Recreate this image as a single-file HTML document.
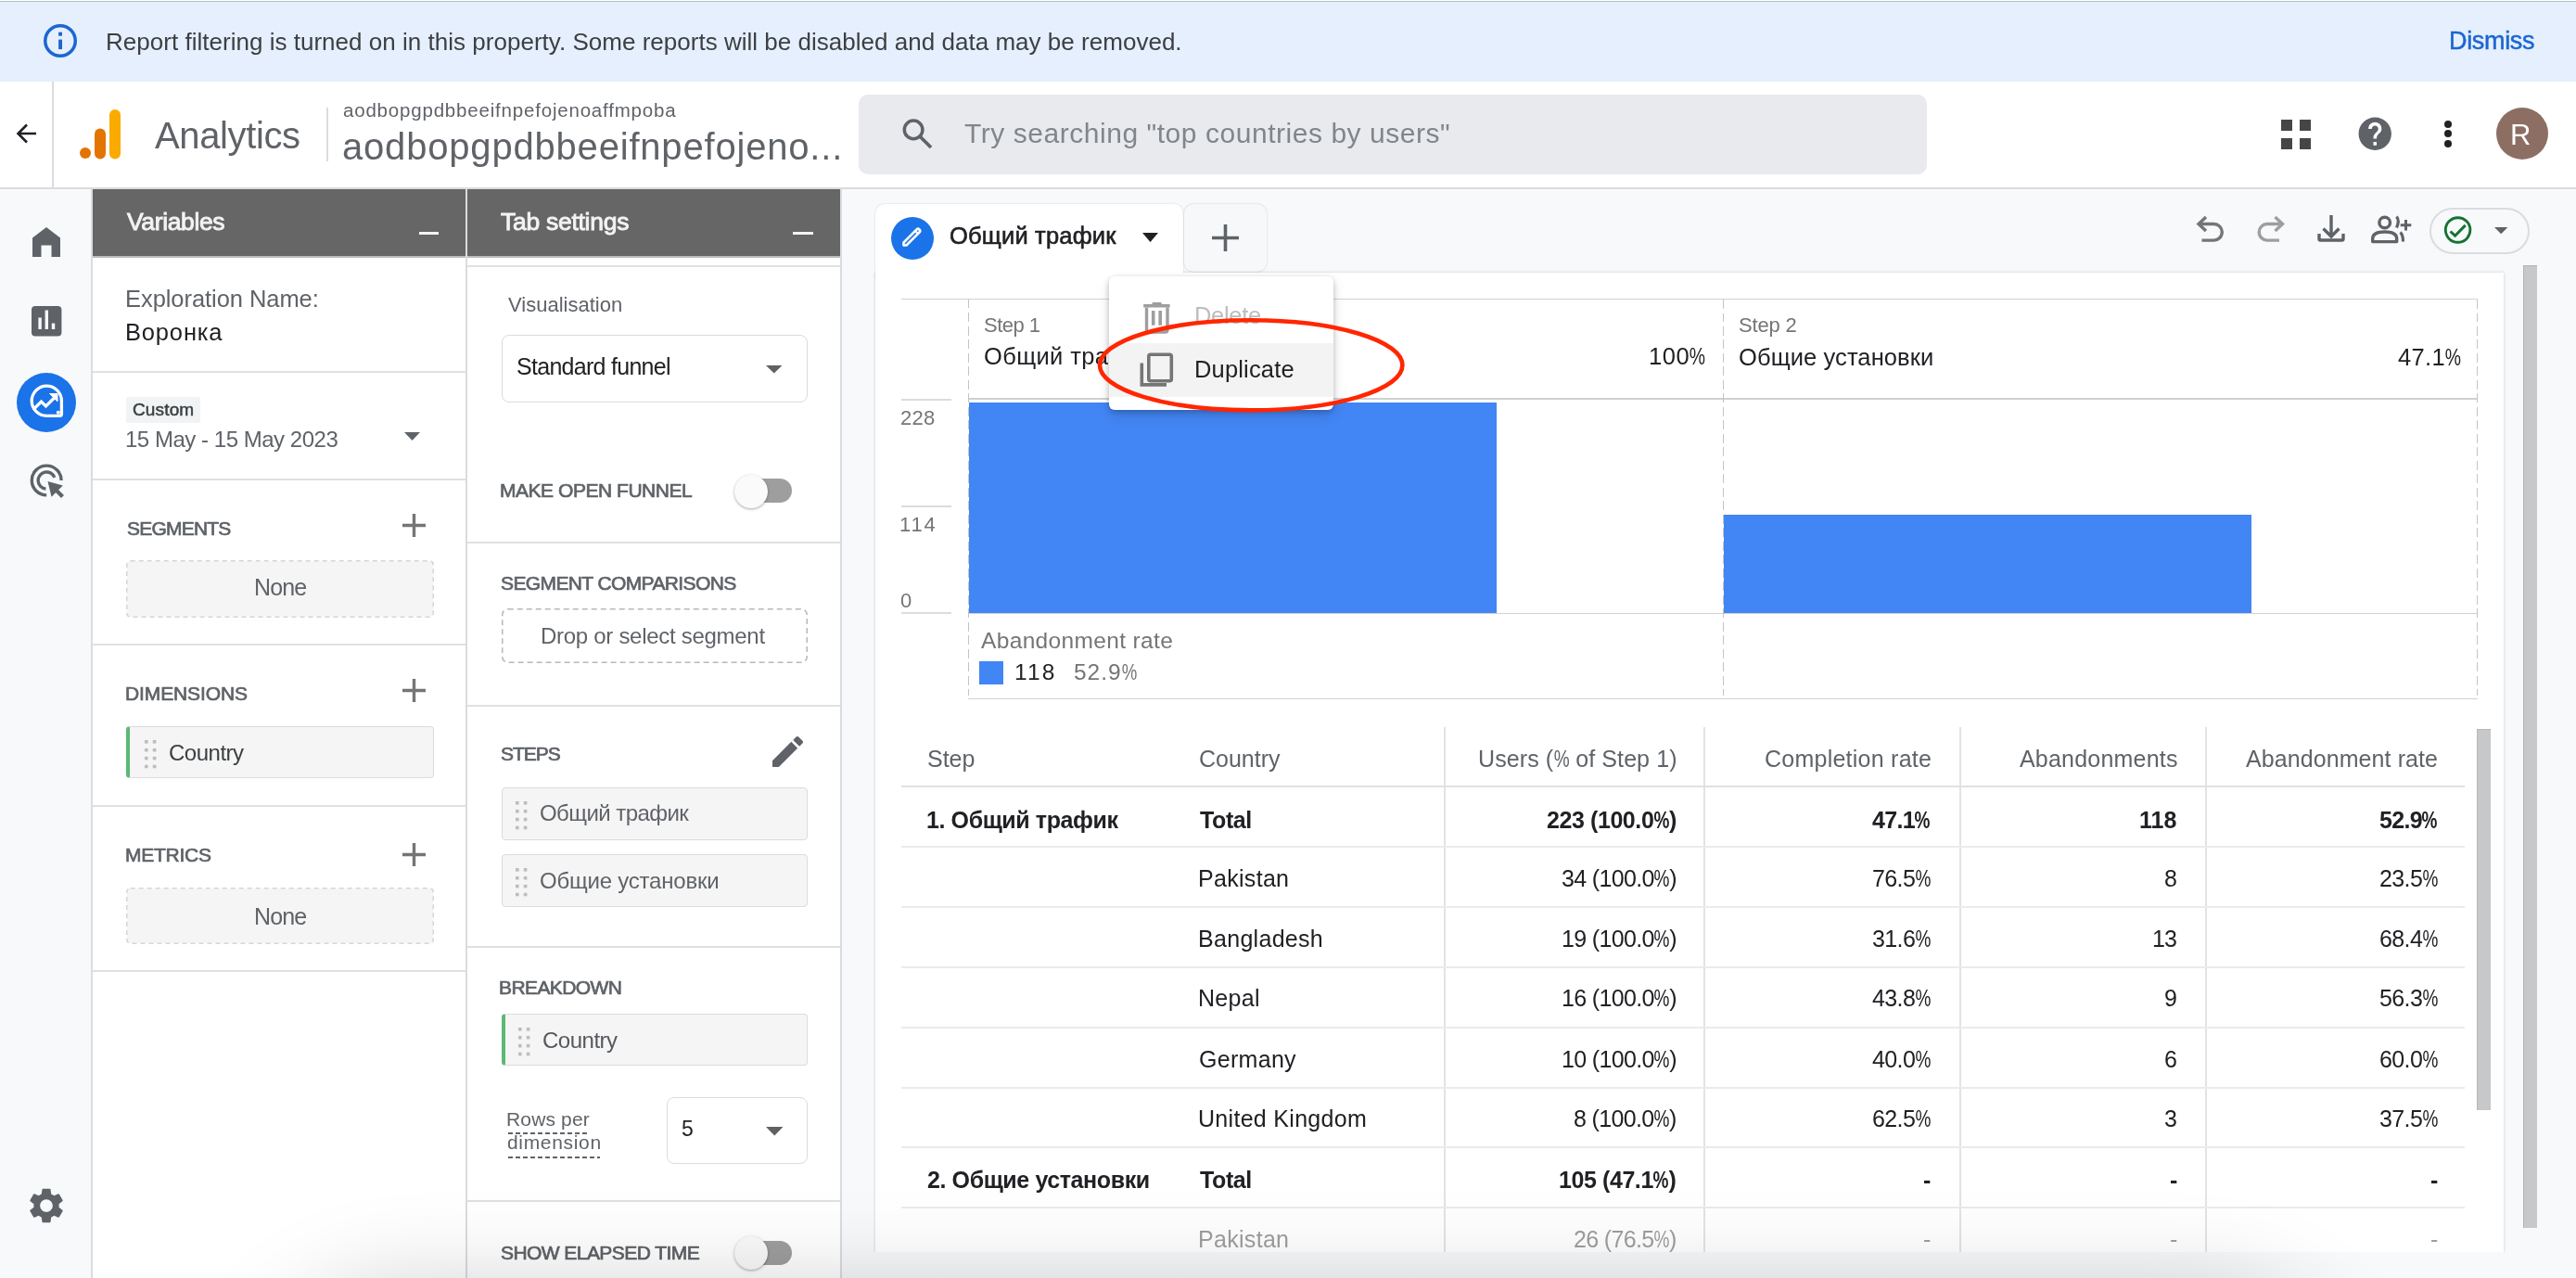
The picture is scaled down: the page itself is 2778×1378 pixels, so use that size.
<!DOCTYPE html>
<html><head><meta charset="utf-8"><style>
html,body{margin:0;padding:0;}
body{width:2778px;height:1378px;overflow:hidden;position:relative;background:#f8f9fa;font-family:"Liberation Sans",sans-serif;}
.t{position:absolute;white-space:pre;line-height:1;will-change:transform;}
.b{position:absolute;box-sizing:border-box;}
.pc{display:inline-block;transform:scaleX(.76);margin:0 -.106em;}
svg{position:absolute;overflow:visible;}
</style></head><body>
<div class="b" style="left:0px;top:0px;width:2778px;height:1px;background:#fff"></div><div class="b" style="left:0px;top:1px;width:2778px;height:1px;background:#b4bec6"></div><div class="b" style="left:0px;top:2px;width:2778px;height:86px;background:#e6effd"></div><svg style="left:46.8px;top:26.3px" width="36" height="36"><circle cx="18" cy="18" r="16.25" fill="none" stroke="#1b66d2" stroke-width="3.5"/><rect x="16.1" y="16.6" width="3.9" height="10.5" fill="#1b66d2"/><rect x="16.1" y="8.7" width="3.9" height="4" fill="#1b66d2"/></svg><div class="t" style="left:114.00px;top:31.90px;font-size:26px;font-weight:400;color:#3c4043;letter-spacing:0.020px;">Report filtering is turned on in this property. Some reports will be disabled and data may be removed.</div><div class="t" style="left:2641.00px;top:31.05px;font-size:27px;font-weight:400;color:#1b66d2;letter-spacing:-0.333px;-webkit-text-stroke:0.5px #1b66d2;">Dismiss</div><div class="b" style="left:0px;top:88px;width:2778px;height:114px;background:#fff"></div><div class="b" style="left:0px;top:202px;width:2778px;height:2px;background:#dadce0"></div><div class="b" style="left:56px;top:88px;width:2px;height:114px;background:#dadce0"></div><svg style="left:17px;top:132px" width="24" height="24" viewBox="0 0 24 24"><path d="M22 12H3.5M12 2.5L2.5 12L12 21.5" fill="none" stroke="#202124" stroke-width="2.6"/></svg><svg style="left:80px;top:118px" width="52" height="54" viewBox="0 0 52 54"><circle cx="12" cy="47" r="6" fill="#e37400"/><rect x="22" y="20.5" width="12" height="33" rx="6" fill="#e37400"/><rect x="38" y="0" width="12" height="53.5" rx="6" fill="#f9ab00"/></svg><div class="t" style="left:167.00px;top:126.00px;font-size:40px;font-weight:400;color:#5f6368;letter-spacing:-0.375px;">Analytics</div><div class="b" style="left:352px;top:116px;width:2px;height:58px;background:#dadce0"></div><div class="t" style="left:370.00px;top:108.58px;font-size:20.5px;font-weight:400;color:#5f6368;letter-spacing:0.806px;">aodbopgpdbbeeifnpefojenoaffmpoba</div><div class="t" style="left:369.00px;top:138.00px;font-size:40px;font-weight:400;color:#5f6368;letter-spacing:0.808px;">aodbopgpdbbeeifnpefojeno...</div><div class="b" style="left:926px;top:102px;width:1152px;height:86px;background:#e9eaed;border-radius:10px"></div><svg style="left:960px;top:115px" width="60" height="60"><circle cx="25.1" cy="24.9" r="9.8" fill="none" stroke="#5f6368" stroke-width="3.5"/><path d="M32.2 32.2L44 44" stroke="#5f6368" stroke-width="3.7"/></svg><div class="t" style="left:1040.00px;top:128.50px;font-size:30px;font-weight:400;color:#80868b;letter-spacing:0.541px;">Try searching &quot;top countries by users&quot;</div><div class="b" style="left:2460px;top:129px;width:12px;height:12px;background:#444746"></div><div class="b" style="left:2460px;top:149px;width:12px;height:12px;background:#444746"></div><div class="b" style="left:2480px;top:129px;width:12px;height:12px;background:#444746"></div><div class="b" style="left:2480px;top:149px;width:12px;height:12px;background:#444746"></div><svg style="left:2539.8px;top:122.8px" width="42.5" height="42.5" viewBox="0 0 24 24"><path fill="#5f6368" d="M12 2C6.48 2 2 6.48 2 12s4.48 10 10 10 10-4.48 10-10S17.52 2 12 2zm1 17h-2v-2h2v2zm2.07-7.75l-.9.92C13.45 12.9 13 13.5 13 15h-2v-.5c0-1.1.45-2.1 1.17-2.83l1.24-1.26c.37-.36.59-.86.59-1.41 0-1.1-.9-2-2-2s-2 .9-2 2H8c0-2.21 1.79-4 4-4s4 1.79 4 4c0 .88-.36 1.68-.93 2.25z"/></svg><div class="b" style="left:2636px;top:130px;width:8px;height:8px;background:#202124;border-radius:50%"></div><div class="b" style="left:2636px;top:140px;width:8px;height:8px;background:#202124;border-radius:50%"></div><div class="b" style="left:2636px;top:151px;width:8px;height:8px;background:#202124;border-radius:50%"></div><div class="b" style="left:2692px;top:116px;width:56px;height:56px;background:#8d6e63;border-radius:50%"></div><div class="t" style="left:2707.00px;top:129.65px;font-size:31px;font-weight:400;color:#ffffff;letter-spacing:0.000px;">R</div><div class="b" style="left:0px;top:204px;width:99px;height:1174px;background:#f8f9fa"></div><div class="b" style="left:98px;top:204px;width:2px;height:1174px;background:#dadce0"></div><div class="b" style="left:100px;top:204px;width:403px;height:1174px;background:#fff"></div><div class="b" style="left:502px;top:204px;width:2px;height:1174px;background:#dadce0"></div><div class="b" style="left:100px;top:204px;width:402px;height:72px;background:#666"></div><div class="b" style="left:100px;top:276px;width:402px;height:2px;background:#bdbdbd"></div><div class="t" style="left:137.00px;top:226.07px;font-size:26.5px;font-weight:400;color:#f3f3f3;letter-spacing:-0.375px;-webkit-text-stroke:0.9px #f3f3f3;">Variables</div><div class="b" style="left:452px;top:250px;width:21px;height:3px;background:#f3f3f3"></div><div class="t" style="left:135.00px;top:310.32px;font-size:25.5px;font-weight:400;color:#5f6368;letter-spacing:-0.062px;">Exploration Name:</div><div class="t" style="left:135.00px;top:346.32px;font-size:25.5px;font-weight:400;color:#202124;letter-spacing:0.833px;">Воронка</div><div class="b" style="left:100px;top:400px;width:402px;height:2px;background:#e0e0e0"></div><div class="b" style="left:136px;top:428px;width:80px;height:28px;background:#f1f3f4;border-radius:2px"></div><div class="t" style="left:143.30px;top:432.05px;font-size:19px;font-weight:400;color:#3c4043;letter-spacing:0.140px;-webkit-text-stroke:0.5px #3c4043;">Custom</div><div class="t" style="left:135.00px;top:461.60px;font-size:24px;font-weight:400;color:#5f6368;letter-spacing:-0.474px;">15 May - 15 May 2023</div><div class="b" style="left:100px;top:516px;width:402px;height:2px;background:#e0e0e0"></div><div class="t" style="left:136.50px;top:558.55px;font-size:21px;font-weight:400;color:#5f6368;letter-spacing:-0.786px;-webkit-text-stroke:0.7px #5f6368;">SEGMENTS</div><svg style="left:136px;top:604px" width="332" height="62"><rect x="0.75" y="0.75" width="330.5" height="60.5" rx="4" fill="#f5f5f5" stroke="#d6d6d6" stroke-width="1.5" stroke-dasharray="5 4"/></svg><div class="t" style="left:273.60px;top:620.75px;font-size:25px;font-weight:400;color:#5f6368;letter-spacing:-0.867px;">None</div><div class="b" style="left:100px;top:694px;width:402px;height:2px;background:#e0e0e0"></div><div class="t" style="left:135.00px;top:736.85px;font-size:21px;font-weight:400;color:#5f6368;letter-spacing:-0.111px;-webkit-text-stroke:0.7px #5f6368;">DIMENSIONS</div><div class="b" style="left:136px;top:783px;width:332px;height:56px;background:#f5f5f5;border:1.5px solid #dadce0;border-left:4px solid #5bb974;border-radius:4px"></div><div class="t" style="left:182.00px;top:800.10px;font-size:24px;font-weight:400;color:#3c4043;letter-spacing:-0.500px;">Country</div><div class="b" style="left:100px;top:868px;width:402px;height:2px;background:#e0e0e0"></div><div class="t" style="left:135.00px;top:910.85px;font-size:21px;font-weight:400;color:#5f6368;letter-spacing:-0.267px;-webkit-text-stroke:0.7px #5f6368;">METRICS</div><svg style="left:136px;top:957px" width="332" height="61"><rect x="0.75" y="0.75" width="330.5" height="59.5" rx="4" fill="#f5f5f5" stroke="#d6d6d6" stroke-width="1.5" stroke-dasharray="5 4"/></svg><div class="t" style="left:273.60px;top:975.75px;font-size:25px;font-weight:400;color:#5f6368;letter-spacing:-0.867px;">None</div><div class="b" style="left:100px;top:1046px;width:402px;height:2px;background:#e0e0e0"></div><div class="b" style="left:504px;top:204px;width:403px;height:1174px;background:#fff"></div><div class="b" style="left:906px;top:204px;width:2px;height:1174px;background:#dadce0"></div><div class="b" style="left:504px;top:204px;width:402px;height:72px;background:#666"></div><div class="b" style="left:504px;top:276px;width:402px;height:2px;background:#bdbdbd"></div><div class="b" style="left:504px;top:286px;width:402px;height:2px;background:#e0e0e0"></div><div class="t" style="left:540.00px;top:226.07px;font-size:26.5px;font-weight:400;color:#f3f3f3;letter-spacing:-0.273px;-webkit-text-stroke:0.9px #f3f3f3;">Tab settings</div><div class="b" style="left:855px;top:250px;width:22px;height:3px;background:#f3f3f3"></div><div class="t" style="left:548.00px;top:317.70px;font-size:22px;font-weight:400;color:#5f6368;letter-spacing:0.000px;">Visualisation</div><div class="b" style="left:541px;top:361px;width:330px;height:73px;border:1.5px solid #dadce0;border-radius:8px;background:#fff"></div><div class="t" style="left:557.00px;top:383.25px;font-size:25px;font-weight:400;color:#202124;letter-spacing:-0.714px;">Standard funnel</div><div class="t" style="left:539.00px;top:518.15px;font-size:21px;font-weight:400;color:#5f6368;letter-spacing:-0.467px;-webkit-text-stroke:0.7px #5f6368;">MAKE OPEN FUNNEL</div><div class="b" style="left:100px;top:0px;width:-100px;height:0px;"></div><div class="b" style="left:504px;top:584px;width:402px;height:2px;background:#e0e0e0"></div><div class="t" style="left:540.00px;top:618.15px;font-size:21px;font-weight:400;color:#5f6368;letter-spacing:-0.611px;-webkit-text-stroke:0.7px #5f6368;">SEGMENT COMPARISONS</div><svg style="left:541px;top:656px" width="330" height="59"><rect x="0.75" y="0.75" width="328.5" height="57.5" rx="6" fill="#fff" stroke="#b8b8b8" stroke-width="1.5" stroke-dasharray="6 4"/></svg><div class="t" style="left:583.30px;top:674.00px;font-size:24px;font-weight:400;color:#5f6368;letter-spacing:-0.286px;">Drop or select segment</div><div class="b" style="left:504px;top:760px;width:402px;height:2px;background:#e0e0e0"></div><div class="t" style="left:540.00px;top:802.15px;font-size:21px;font-weight:400;color:#5f6368;letter-spacing:-1.000px;-webkit-text-stroke:0.7px #5f6368;">STEPS</div><div class="b" style="left:541px;top:849px;width:330px;height:57px;background:#f5f5f5;border:1.5px solid #dadce0;border-radius:4px"></div><div class="t" style="left:581.70px;top:865.30px;font-size:24px;font-weight:400;color:#5f6368;letter-spacing:-0.564px;">Общий трафик</div><div class="b" style="left:541px;top:921px;width:330px;height:57px;background:#f5f5f5;border:1.5px solid #dadce0;border-radius:4px"></div><div class="t" style="left:581.70px;top:937.60px;font-size:24px;font-weight:400;color:#5f6368;letter-spacing:-0.214px;">Общие установки</div><div class="b" style="left:504px;top:1020px;width:402px;height:2px;background:#e0e0e0"></div><div class="t" style="left:538.40px;top:1054.15px;font-size:21px;font-weight:400;color:#5f6368;letter-spacing:-0.587px;-webkit-text-stroke:0.7px #5f6368;">BREAKDOWN</div><div class="b" style="left:541px;top:1093px;width:330px;height:56px;background:#f5f5f5;border:1.5px solid #dadce0;border-left:4px solid #5bb974;border-radius:4px"></div><div class="t" style="left:585.00px;top:1109.60px;font-size:24px;font-weight:400;color:#55595e;letter-spacing:-0.500px;">Country</div><div class="t" style="left:546.00px;top:1195.75px;font-size:21px;font-weight:400;color:#5f6368;letter-spacing:0.143px;">Rows per</div><div class="t" style="left:547.00px;top:1221.15px;font-size:21px;font-weight:400;color:#5f6368;letter-spacing:0.675px;">dimension</div><div class="b" style="left:719px;top:1183px;width:152px;height:72px;border:1.5px solid #dadce0;border-radius:8px;background:#fff"></div><div class="t" style="left:735.00px;top:1206.45px;font-size:23px;font-weight:400;color:#202124;letter-spacing:0.000px;">5</div><div class="b" style="left:504px;top:1294px;width:402px;height:2px;background:#e0e0e0"></div><div class="t" style="left:540.00px;top:1339.75px;font-size:21px;font-weight:400;color:#5f6368;letter-spacing:-0.562px;-webkit-text-stroke:0.7px #5f6368;">SHOW ELAPSED TIME</div><div class="b" style="left:944px;top:220px;width:332px;height:80px;background:#fff;border-radius:10px 10px 0 0;box-shadow:0 0 2px rgba(0,0,0,.18)"></div><div class="b" style="left:1277px;top:220px;width:89px;height:73px;background:#f7f8f9;border-radius:10px;box-shadow:0 0 2px rgba(0,0,0,.22)"></div><div class="b" style="left:944px;top:294px;width:1756px;height:1056px;background:#fff;box-shadow:0 0 3px rgba(0,0,0,.2)"></div><div class="b" style="left:945px;top:288px;width:331px;height:12px;background:#fff"></div><div class="b" style="left:961px;top:234px;width:46px;height:46px;background:#1a73e8;border-radius:50%"></div><div class="t" style="left:1024.00px;top:241.93px;font-size:25.5px;font-weight:400;color:#202124;letter-spacing:0.182px;-webkit-text-stroke:0.6px #202124;">Общий трафик</div><div class="t" style="left:1061.00px;top:339.70px;font-size:22px;font-weight:400;color:#757575;letter-spacing:-0.520px;">Step 1</div><div class="t" style="left:1061.00px;top:372.12px;font-size:25.5px;font-weight:400;color:#202124;letter-spacing:0.364px;">Общий трафик</div><div class="t" style="left:1778.00px;top:371.72px;font-size:25.5px;font-weight:400;color:#202124;letter-spacing:0.533px;">100<span class="pc">%</span></div><div class="t" style="left:1875.40px;top:339.70px;font-size:22px;font-weight:400;color:#757575;letter-spacing:-0.180px;">Step 2</div><div class="t" style="left:1875.00px;top:373.12px;font-size:25.5px;font-weight:400;color:#202124;letter-spacing:0.093px;">Общие установки</div><div class="t" style="left:2585.50px;top:373.12px;font-size:25.5px;font-weight:400;color:#202124;letter-spacing:0.375px;">47.1<span class="pc">%</span></div><div class="t" style="left:971.00px;top:439.70px;font-size:22px;font-weight:400;color:#757575;letter-spacing:0.300px;">228</div><div class="t" style="left:970.00px;top:554.90px;font-size:22px;font-weight:400;color:#757575;letter-spacing:1.800px;">114</div><div class="t" style="left:971.00px;top:636.80px;font-size:22px;font-weight:400;color:#757575;letter-spacing:0.000px;">0</div><div class="t" style="left:1057.50px;top:678.97px;font-size:24.5px;font-weight:400;color:#757575;letter-spacing:0.347px;">Abandonment rate</div><div class="t" style="left:1093.80px;top:712.77px;font-size:24.5px;font-weight:400;color:#202124;letter-spacing:2.100px;">118</div><div class="t" style="left:1157.50px;top:712.77px;font-size:24.5px;font-weight:400;color:#757575;letter-spacing:0.950px;">52.9<span class="pc">%</span></div><div class="b" style="left:972px;top:322px;width:1700px;height:1.3000000000000114px;background:#d2d2d2"></div><div class="b" style="left:1044px;top:429px;width:1627px;height:2px;background:#d0d0d0"></div><div class="b" style="left:972px;top:430px;width:54px;height:2px;background:#dadce0"></div><div class="b" style="left:972px;top:545px;width:54px;height:2px;background:#dadce0"></div><div class="b" style="left:972px;top:660px;width:54px;height:2px;background:#dadce0"></div><div class="b" style="left:1044px;top:660.5px;width:1628px;height:1.2999999999999545px;background:#d2d2d2"></div><div class="b" style="left:1044px;top:752.5px;width:1628px;height:1.2999999999999545px;background:#d2d2d2"></div><div class="b" style="left:1045px;top:434px;width:569px;height:227px;background:#4285f4"></div><div class="b" style="left:1859px;top:555px;width:569px;height:106px;background:#4285f4"></div><div class="b" style="left:1056px;top:713px;width:26px;height:25px;background:#4285f4"></div><div class="b" style="left:1044px;top:323px;width:1.400000000000091px;height:427px;background:repeating-linear-gradient(to bottom,#c4c4c4 0 9.5px,transparent 9.5px 14.5px)"></div><div class="b" style="left:1857.5px;top:323px;width:1.400000000000091px;height:427px;background:repeating-linear-gradient(to bottom,#c4c4c4 0 9.5px,transparent 9.5px 14.5px)"></div><div class="b" style="left:2671px;top:323px;width:1.400000000000091px;height:427px;background:repeating-linear-gradient(to bottom,#c4c4c4 0 9.5px,transparent 9.5px 14.5px)"></div><div class="b" style="left:2620px;top:224px;width:108px;height:50px;border:2px solid #dadce0;border-radius:25px"></div><div class="b" style="left:1557px;top:784px;width:2px;height:566px;background:#e3e3e3"></div><div class="b" style="left:1837px;top:784px;width:2px;height:566px;background:#e3e3e3"></div><div class="b" style="left:2113px;top:784px;width:2px;height:566px;background:#e3e3e3"></div><div class="b" style="left:2378px;top:784px;width:2px;height:566px;background:#e3e3e3"></div><div class="b" style="left:972px;top:847px;width:1686px;height:2px;background:#e0e0e0"></div><div class="b" style="left:972px;top:912px;width:1686px;height:2px;background:#ebebeb"></div><div class="b" style="left:972px;top:977px;width:1686px;height:2px;background:#ebebeb"></div><div class="b" style="left:972px;top:1042px;width:1686px;height:2px;background:#ebebeb"></div><div class="b" style="left:972px;top:1107px;width:1686px;height:2px;background:#ebebeb"></div><div class="b" style="left:972px;top:1172px;width:1686px;height:2px;background:#ebebeb"></div><div class="b" style="left:972px;top:1236px;width:1686px;height:2px;background:#ebebeb"></div><div class="b" style="left:972px;top:1301px;width:1686px;height:2px;background:#ebebeb"></div><div class="t" style="left:1000.40px;top:805.75px;font-size:25px;font-weight:400;color:#5f6368;letter-spacing:0.000px;">Step</div><div class="t" style="left:1292.60px;top:805.75px;font-size:25px;font-weight:400;color:#5f6368;letter-spacing:0.000px;">Country</div><div class="t" style="left:1594.40px;top:805.75px;font-size:25px;font-weight:400;color:#5f6368;letter-spacing:0.089px;">Users (<span class="pc">%</span> of Step 1)</div><div class="t" style="left:1903.00px;top:805.75px;font-size:25px;font-weight:400;color:#5f6368;letter-spacing:0.243px;">Completion rate</div><div class="t" style="left:2177.80px;top:805.75px;font-size:25px;font-weight:400;color:#5f6368;letter-spacing:0.200px;">Abandonments</div><div class="t" style="left:2421.70px;top:805.75px;font-size:25px;font-weight:400;color:#5f6368;letter-spacing:0.087px;">Abandonment rate</div><div class="t" style="left:999.40px;top:871.75px;font-size:25px;font-weight:700;color:#202124;letter-spacing:-0.401px;">1. Общий трафик</div><div class="t" style="left:1293.60px;top:871.75px;font-size:25px;font-weight:700;color:#202124;letter-spacing:-0.401px;">Total</div><div class="t" style="left:1667.60px;top:871.75px;font-size:25px;font-weight:700;color:#202124;letter-spacing:-0.418px;">223 (100.0<span class="pc">%</span>)</div><div class="t" style="left:2019.00px;top:871.75px;font-size:25px;font-weight:700;color:#202124;letter-spacing:-0.650px;">47.1<span class="pc">%</span></div><div class="t" style="left:2307.00px;top:871.75px;font-size:25px;font-weight:700;color:#202124;letter-spacing:0.000px;">118</div><div class="t" style="left:2565.60px;top:871.75px;font-size:25px;font-weight:700;color:#202124;letter-spacing:-0.650px;">52.9<span class="pc">%</span></div><div class="t" style="left:1291.60px;top:935.15px;font-size:25px;font-weight:400;color:#202124;letter-spacing:0.301px;">Pakistan</div><div class="t" style="left:1684.40px;top:935.15px;font-size:25px;font-weight:400;color:#202124;letter-spacing:-0.640px;">34 (100.0<span class="pc">%</span>)</div><div class="t" style="left:2018.90px;top:935.15px;font-size:25px;font-weight:400;color:#202124;letter-spacing:-0.625px;">76.5<span class="pc">%</span></div><div class="t" style="left:2334.00px;top:935.15px;font-size:25px;font-weight:400;color:#202124;letter-spacing:-0.800px;">8</div><div class="t" style="left:2565.50px;top:935.15px;font-size:25px;font-weight:400;color:#202124;letter-spacing:-0.625px;">23.5<span class="pc">%</span></div><div class="t" style="left:1291.60px;top:1000.15px;font-size:25px;font-weight:400;color:#202124;letter-spacing:0.301px;">Bangladesh</div><div class="t" style="left:1684.40px;top:1000.15px;font-size:25px;font-weight:400;color:#202124;letter-spacing:-0.640px;">19 (100.0<span class="pc">%</span>)</div><div class="t" style="left:2018.90px;top:1000.15px;font-size:25px;font-weight:400;color:#202124;letter-spacing:-0.625px;">31.6<span class="pc">%</span></div><div class="t" style="left:2320.80px;top:1000.15px;font-size:25px;font-weight:400;color:#202124;letter-spacing:-0.800px;">13</div><div class="t" style="left:2565.50px;top:1000.15px;font-size:25px;font-weight:400;color:#202124;letter-spacing:-0.625px;">68.4<span class="pc">%</span></div><div class="t" style="left:1291.60px;top:1064.45px;font-size:25px;font-weight:400;color:#202124;letter-spacing:0.301px;">Nepal</div><div class="t" style="left:1684.40px;top:1064.45px;font-size:25px;font-weight:400;color:#202124;letter-spacing:-0.640px;">16 (100.0<span class="pc">%</span>)</div><div class="t" style="left:2018.90px;top:1064.45px;font-size:25px;font-weight:400;color:#202124;letter-spacing:-0.625px;">43.8<span class="pc">%</span></div><div class="t" style="left:2334.00px;top:1064.45px;font-size:25px;font-weight:400;color:#202124;letter-spacing:-0.800px;">9</div><div class="t" style="left:2565.50px;top:1064.45px;font-size:25px;font-weight:400;color:#202124;letter-spacing:-0.625px;">56.3<span class="pc">%</span></div><div class="t" style="left:1292.60px;top:1130.15px;font-size:25px;font-weight:400;color:#202124;letter-spacing:0.301px;">Germany</div><div class="t" style="left:1684.40px;top:1130.15px;font-size:25px;font-weight:400;color:#202124;letter-spacing:-0.640px;">10 (100.0<span class="pc">%</span>)</div><div class="t" style="left:2018.90px;top:1130.15px;font-size:25px;font-weight:400;color:#202124;letter-spacing:-0.625px;">40.0<span class="pc">%</span></div><div class="t" style="left:2334.00px;top:1130.15px;font-size:25px;font-weight:400;color:#202124;letter-spacing:-0.800px;">6</div><div class="t" style="left:2565.50px;top:1130.15px;font-size:25px;font-weight:400;color:#202124;letter-spacing:-0.625px;">60.0<span class="pc">%</span></div><div class="t" style="left:1291.60px;top:1194.45px;font-size:25px;font-weight:400;color:#202124;letter-spacing:0.301px;">United Kingdom</div><div class="t" style="left:1696.76px;top:1194.45px;font-size:25px;font-weight:400;color:#202124;letter-spacing:-0.640px;">8 (100.0<span class="pc">%</span>)</div><div class="t" style="left:2018.90px;top:1194.45px;font-size:25px;font-weight:400;color:#202124;letter-spacing:-0.625px;">62.5<span class="pc">%</span></div><div class="t" style="left:2334.00px;top:1194.45px;font-size:25px;font-weight:400;color:#202124;letter-spacing:-0.800px;">3</div><div class="t" style="left:2565.50px;top:1194.45px;font-size:25px;font-weight:400;color:#202124;letter-spacing:-0.625px;">37.5<span class="pc">%</span></div><div class="t" style="left:1000.40px;top:1259.75px;font-size:25px;font-weight:700;color:#202124;letter-spacing:-0.401px;">2. Общие установки</div><div class="t" style="left:1293.60px;top:1259.75px;font-size:25px;font-weight:700;color:#202124;letter-spacing:-0.401px;">Total</div><div class="t" style="left:1681.18px;top:1259.75px;font-size:25px;font-weight:700;color:#202124;letter-spacing:-0.418px;">105 (47.1<span class="pc">%</span>)</div><div class="t" style="left:2074.40px;top:1259.75px;font-size:25px;font-weight:700;color:#202124;letter-spacing:0.000px;">-</div><div class="t" style="left:2340.00px;top:1259.75px;font-size:25px;font-weight:700;color:#202124;letter-spacing:0.000px;">-</div><div class="t" style="left:2621.00px;top:1259.75px;font-size:25px;font-weight:700;color:#202124;letter-spacing:0.000px;">-</div><div class="t" style="left:1291.60px;top:1324.15px;font-size:25px;font-weight:400;color:#9e9e9e;letter-spacing:0.301px;">Pakistan</div><div class="t" style="left:1696.76px;top:1324.15px;font-size:25px;font-weight:400;color:#9e9e9e;letter-spacing:-0.640px;">26 (76.5<span class="pc">%</span>)</div><div class="t" style="left:2074.40px;top:1324.15px;font-size:25px;font-weight:400;color:#9e9e9e;letter-spacing:0.000px;">-</div><div class="t" style="left:2340.00px;top:1324.15px;font-size:25px;font-weight:400;color:#9e9e9e;letter-spacing:0.000px;">-</div><div class="t" style="left:2621.00px;top:1324.15px;font-size:25px;font-weight:400;color:#9e9e9e;letter-spacing:0.000px;">-</div><svg style="left:0;top:0" width="100" height="1378"><path d="M35 256.5L50 245L65 256.5V277H55.5V264.5H44.5V277H35Z" fill="#5f6368"/><rect x="34" y="330" width="32.4" height="32.4" rx="4" fill="#5f6368"/><rect x="41.4" y="342.5" width="3.4" height="12.5" fill="#f8f9fa"/><rect x="48.6" y="334.5" width="3.4" height="20.5" fill="#f8f9fa"/><rect x="55.8" y="348.6" width="3.4" height="6.4" fill="#f8f9fa"/><circle cx="50" cy="434" r="32" fill="#1a73e8"/><path d="M34.2 432.3A16.1 16.1 0 0 1 66.4 432.3V446.6Q66.4 448.4 64.6 448.4H50.3A16.1 16.1 0 0 1 34.2 432.3Z" fill="none" stroke="#fff" stroke-width="3.3"/><path d="M37.5 440L44.5 433L49.5 438L59 428.5" fill="none" stroke="#fff" stroke-width="3.2"/><path d="M53.5 424.5H62V433Z" fill="#fff" stroke="#fff" stroke-width="1"/><circle cx="62.8" cy="444.8" r="2" fill="#fff"/><path d="M66.1 518A15.9 15.9 0 1 0 50.2 533.9" fill="none" stroke="#5f6368" stroke-width="3.4"/><path d="M58.8 514.9A9.1 9.1 0 1 0 49.4 527.1" fill="none" stroke="#5f6368" stroke-width="3.4"/><path d="M51.5 519L67.8 523.5L55.5 535.8Z" fill="#5f6368"/><path d="M59 527L67.5 535.5" stroke="#5f6368" stroke-width="4.2"/></svg><svg style="left:32.4px;top:1282.2px" width="36" height="36" viewBox="2.5 2.5 19 19"><path fill="#5f6368" d="M19.14 12.94c.04-.3.06-.61.06-.94 0-.32-.02-.64-.07-.94l2.03-1.58a.49.49 0 0 0 .12-.61l-1.92-3.32a.488.488 0 0 0-.59-.22l-2.39.96c-.5-.38-1.03-.7-1.62-.94l-.36-2.54a.484.484 0 0 0-.48-.41h-3.84c-.24 0-.43.17-.47.41l-.36 2.54c-.59.24-1.13.57-1.62.94l-2.39-.96c-.22-.08-.47 0-.59.22L2.74 8.87c-.12.21-.08.47.12.61l2.03 1.58c-.05.3-.09.63-.09.94s.02.64.07.94l-2.03 1.58a.49.49 0 0 0-.12.61l1.92 3.32c.12.22.37.29.59.22l2.39-.96c.5.38 1.03.7 1.62.94l.36 2.54c.05.24.24.41.48.41h3.84c.24 0 .44-.17.47-.41l.36-2.54c.59-.24 1.13-.56 1.62-.94l2.39.96c.22.08.47 0 .59-.22l1.92-3.32c.12-.22.07-.47-.12-.61l-2.01-1.58zM12 15.6c-1.98 0-3.6-1.62-3.6-3.6s1.62-3.6 3.6-3.6 3.6 1.62 3.6 3.6-1.62 3.6-3.6 3.6z"/></svg><svg style="left:434px;top:554px" width="25" height="25"><path d="M12.5 0V25M0 12.5H25" stroke="#757575" stroke-width="3.4"/></svg><svg style="left:434px;top:732px" width="25" height="25"><path d="M12.5 0V25M0 12.5H25" stroke="#757575" stroke-width="3.4"/></svg><svg style="left:434px;top:909px" width="25" height="25"><path d="M12.5 0V25M0 12.5H25" stroke="#757575" stroke-width="3.4"/></svg><svg style="left:435.5px;top:465.6px" width="17" height="9"><path d="M0 0H17L8.5 9Z" fill="#5f6368"/></svg><svg style="left:826px;top:394px" width="17.5" height="8.5"><path d="M0 0H17.5L8.75 8.5Z" fill="#616161"/></svg><svg style="left:825.7px;top:1215px" width="18.5" height="9.5"><path d="M0 0H18.5L9.25 9.5Z" fill="#616161"/></svg><svg style="left:156px;top:798px" width="13" height="31"><rect x="0" y="0.0" width="3.6" height="3.6" fill="#bdbdbd"/><rect x="0" y="8.9" width="3.6" height="3.6" fill="#bdbdbd"/><rect x="0" y="17.8" width="3.6" height="3.6" fill="#bdbdbd"/><rect x="0" y="26.700000000000003" width="3.6" height="3.6" fill="#bdbdbd"/><rect x="8.8" y="0.0" width="3.6" height="3.6" fill="#bdbdbd"/><rect x="8.8" y="8.9" width="3.6" height="3.6" fill="#bdbdbd"/><rect x="8.8" y="17.8" width="3.6" height="3.6" fill="#bdbdbd"/><rect x="8.8" y="26.700000000000003" width="3.6" height="3.6" fill="#bdbdbd"/></svg><svg style="left:556px;top:864px" width="13" height="31"><rect x="0" y="0.0" width="3.6" height="3.6" fill="#bdbdbd"/><rect x="0" y="8.9" width="3.6" height="3.6" fill="#bdbdbd"/><rect x="0" y="17.8" width="3.6" height="3.6" fill="#bdbdbd"/><rect x="0" y="26.700000000000003" width="3.6" height="3.6" fill="#bdbdbd"/><rect x="8.8" y="0.0" width="3.6" height="3.6" fill="#bdbdbd"/><rect x="8.8" y="8.9" width="3.6" height="3.6" fill="#bdbdbd"/><rect x="8.8" y="17.8" width="3.6" height="3.6" fill="#bdbdbd"/><rect x="8.8" y="26.700000000000003" width="3.6" height="3.6" fill="#bdbdbd"/></svg><svg style="left:556px;top:936px" width="13" height="31"><rect x="0" y="0.0" width="3.6" height="3.6" fill="#bdbdbd"/><rect x="0" y="8.9" width="3.6" height="3.6" fill="#bdbdbd"/><rect x="0" y="17.8" width="3.6" height="3.6" fill="#bdbdbd"/><rect x="0" y="26.700000000000003" width="3.6" height="3.6" fill="#bdbdbd"/><rect x="8.8" y="0.0" width="3.6" height="3.6" fill="#bdbdbd"/><rect x="8.8" y="8.9" width="3.6" height="3.6" fill="#bdbdbd"/><rect x="8.8" y="17.8" width="3.6" height="3.6" fill="#bdbdbd"/><rect x="8.8" y="26.700000000000003" width="3.6" height="3.6" fill="#bdbdbd"/></svg><svg style="left:558.5px;top:1107.5px" width="13" height="31"><rect x="0" y="0.0" width="3.6" height="3.6" fill="#bdbdbd"/><rect x="0" y="8.9" width="3.6" height="3.6" fill="#bdbdbd"/><rect x="0" y="17.8" width="3.6" height="3.6" fill="#bdbdbd"/><rect x="0" y="26.700000000000003" width="3.6" height="3.6" fill="#bdbdbd"/><rect x="8.8" y="0.0" width="3.6" height="3.6" fill="#bdbdbd"/><rect x="8.8" y="8.9" width="3.6" height="3.6" fill="#bdbdbd"/><rect x="8.8" y="17.8" width="3.6" height="3.6" fill="#bdbdbd"/><rect x="8.8" y="26.700000000000003" width="3.6" height="3.6" fill="#bdbdbd"/></svg><svg style="left:833px;top:794px" width="33" height="33" viewBox="3 3 18 18"><path fill="#5f6368" d="M3 17.25V21h3.75L17.81 9.94l-3.75-3.75L3 17.25zM20.71 7.04a.996.996 0 0 0 0-1.41l-2.34-2.34a.996.996 0 0 0-1.41 0l-1.83 1.83 3.75 3.75 1.83-1.83z"/></svg><div class="b" style="left:799.3px;top:516px;width:55.0px;height:26px;background:#9e9e9e;border-radius:13px"></div><div class="b" style="left:792.3px;top:511.5px;width:36.0px;height:36.0px;background:#fafafa;border-radius:50%;box-shadow:0 1px 3px rgba(0,0,0,.35)"></div><div class="b" style="left:799.3px;top:1338px;width:55.0px;height:26px;background:#9e9e9e;border-radius:13px"></div><div class="b" style="left:792.3px;top:1333px;width:36.0px;height:36px;background:#fafafa;border-radius:50%;box-shadow:0 1px 3px rgba(0,0,0,.35)"></div><div class="b" style="left:548px;top:1221px;width:88px;height:2px;background:repeating-linear-gradient(to right,#5f6368 0 5px,transparent 5px 8px)"></div><div class="b" style="left:548px;top:1247px;width:99px;height:2px;background:repeating-linear-gradient(to right,#5f6368 0 5px,transparent 5px 8px)"></div><svg style="left:961px;top:234px" width="46" height="46"><path d="M13.5 27.5L27.5 13.5Q29 12 30.5 13.5Q32 15 30.5 16.5L16.5 30.5H13.5Z" fill="none" stroke="#fff" stroke-width="2.6" stroke-linejoin="round"/><path d="M26 15L29 18" stroke="#fff" stroke-width="2"/></svg><svg style="left:1232px;top:251px" width="17" height="10"><path d="M0 0H17L8.5 10Z" fill="#202124"/></svg><svg style="left:1306.5px;top:242px" width="29" height="29"><path d="M14.5 0V29M0 14.5H29" stroke="#5f6368" stroke-width="3.6"/></svg><svg style="left:2360px;top:220px" width="380" height="60"><path d="M19 14L11 21.5L19 29" fill="none" stroke="#757575" stroke-width="3.4"/><path d="M11.5 21.5H27.5A8.8 8.8 0 0 1 27.5 39.1H14.5" fill="none" stroke="#757575" stroke-width="3.4"/><path d="M93.5 14L101.5 21.5L93.5 29" fill="none" stroke="#9e9e9e" stroke-width="3.4"/><path d="M101 21.5H85A8.8 8.8 0 0 0 85 39.1H98" fill="none" stroke="#9e9e9e" stroke-width="3.4"/><path d="M154 12V35M145.5 26.5L154 35L162.5 26.5" fill="none" stroke="#5f6368" stroke-width="3.4"/><path d="M141 32V37.5Q141 39 142.5 39H165.5Q167 39 167 37.5V32" fill="none" stroke="#5f6368" stroke-width="3.4"/><circle cx="211.7" cy="20" r="5.8" fill="none" stroke="#5f6368" stroke-width="3.4"/><path d="M198.7 40.6V37.5Q198.7 30 211.7 30Q224.7 30 224.7 37.5V40.6Z" fill="none" stroke="#5f6368" stroke-width="3.4" stroke-linejoin="round"/><path d="M224.5 13.5Q228 18 224.5 25.5" fill="none" stroke="#5f6368" stroke-width="3.2"/><path d="M228.5 30.5Q231.5 33 231.5 40.6" fill="none" stroke="#5f6368" stroke-width="3.2"/><path d="M234.5 17V28.5M228.7 22.8H240.3" stroke="#5f6368" stroke-width="3"/><circle cx="290.6" cy="28" r="13.3" fill="none" stroke="#137333" stroke-width="2.9"/><path d="M282.5 29.5L287.6 34.2L298.7 22.9" fill="none" stroke="#137333" stroke-width="3"/><path d="M330 25H344.4L337.2 32.2Z" fill="#5f6368"/></svg><div class="b" style="left:2721px;top:286px;width:15px;height:1038px;background:#c7c8ca;border-left:1.2px solid #b2b2b2;border-top:1.2px solid #b2b2b2"></div><div class="b" style="left:2671px;top:786px;width:15px;height:411px;background:#c7c8ca;border-left:1.2px solid #b8b8b8;border-top:1.2px solid #b8b8b8"></div><div class="b" style="left:1196px;top:298px;width:242px;height:144px;background:#fff;border-radius:6px;box-shadow:0 2px 6px rgba(0,0,0,.22),0 6px 14px rgba(0,0,0,.12)"></div><div class="b" style="left:1196px;top:370px;width:242px;height:58px;background:#f3f3f3"></div><div class="t" style="left:1288.00px;top:328.32px;font-size:25.5px;font-weight:400;color:#bdbdbd;letter-spacing:-0.320px;">Delete</div><div class="t" style="left:1288.00px;top:386.32px;font-size:25.5px;font-weight:400;color:#202124;letter-spacing:0.162px;">Duplicate</div><svg style="left:1225px;top:320px" width="50" height="110"><path d="M8.2 9.8H36.6M17.6 7.8H27.6" stroke="#9e9e9e" stroke-width="3.6"/><path d="M11.5 11.5V35.5Q11.5 38 14 38H31.5Q34 38 34 35.5V11.5" fill="none" stroke="#9e9e9e" stroke-width="3.4"/><path d="M18.7 15V30.7M26.2 15V30.7" stroke="#9e9e9e" stroke-width="3.6"/><path d="M6.3 71.4V94.9H33" fill="none" stroke="#757575" stroke-width="3.6"/><rect x="13.8" y="62.2" width="24.5" height="28.5" rx="2" fill="none" stroke="#757575" stroke-width="3.6"/></svg><svg style="left:0;top:0" width="2778" height="1378" class="ov"><ellipse cx="1349.2" cy="393.8" rx="163.2" ry="48.6" fill="none" stroke="#ff2600" stroke-width="4.6"/></svg><div class="b" style="left:943px;top:1350px;width:1757px;height:28px;background:#f8f9fa"></div><div style="position:absolute;left:0;top:1180px;width:2778px;height:198px;overflow:hidden;pointer-events:none"><div style="position:absolute;left:330px;top:250px;width:2150px;height:200px;border-radius:120px;box-shadow:0 0 110px 35px rgba(0,0,0,.22)"></div></div>
</body></html>
